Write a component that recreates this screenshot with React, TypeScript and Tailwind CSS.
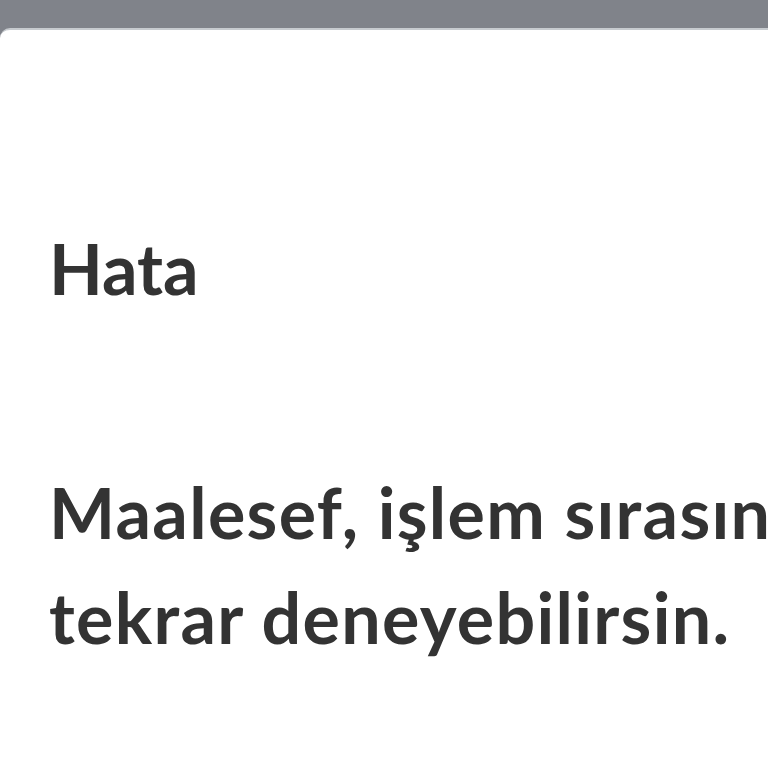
export default function App() {
  return (
    <div className="h-[768px] w-[768px] overflow-hidden bg-[#80838a] pt-[28px]" style={{ fontFamily: 'Lato, "Open Sans", sans-serif' }}>
      <div className="h-full w-[1600px] rounded-tl-[10px] border-t-2 border-[#c7cbcf] bg-white pl-[49px] pt-[186px] text-[#333333]">
        <h1 className="text-[70px] font-bold leading-[105px]">Hata</h1>
        <p className="mt-[139px] whitespace-nowrap text-[70px] font-bold leading-[105px] tracking-[1.3px]">
          Maalesef, işlem sırasında bir hata oluştu. Daha sonra
          <br />
          tekrar deneyebilirsin.
        </p>
      </div>
    </div>
  );
}
